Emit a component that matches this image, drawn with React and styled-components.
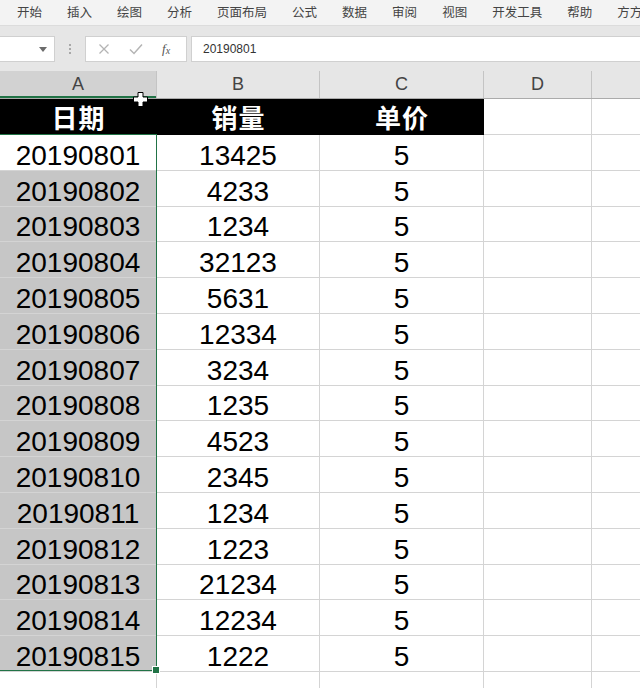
import React from "react";
import styled, { createGlobalStyle } from "styled-components";

const GlobalStyle = createGlobalStyle`
  body {
    margin: 0;
    overflow: hidden;
    background: #ffffff;
    font-family: "Liberation Sans", "Noto Sans CJK SC", sans-serif;
  }
`;

const tabs = [
  "开始",
  "插入",
  "绘图",
  "分析",
  "页面布局",
  "公式",
  "数据",
  "审阅",
  "视图",
  "开发工具",
  "帮助",
  "方方格子",
];

const columns = [
  { name: "A", width: 157 },
  { name: "B", width: 163 },
  { name: "C", width: 164 },
  { name: "D", width: 108 },
  { name: "", width: 60 },
];

const rows = [
  ["20190801", "13425", "5"],
  ["20190802", "4233", "5"],
  ["20190803", "1234", "5"],
  ["20190804", "32123", "5"],
  ["20190805", "5631", "5"],
  ["20190806", "12334", "5"],
  ["20190807", "3234", "5"],
  ["20190808", "1235", "5"],
  ["20190809", "4523", "5"],
  ["20190810", "2345", "5"],
  ["20190811", "1234", "5"],
  ["20190812", "1223", "5"],
  ["20190813", "21234", "5"],
  ["20190814", "12234", "5"],
  ["20190815", "1222", "5"],
];

const ROW_H = 35.8;
const gridTemplate = columns.map((c) => `${c.width}px`).join(" ");

const App = () => {
  return (
    <Page>
      <GlobalStyle />
      <Ribbon>
        {tabs.map((t) => (
          <Tab key={t}>{t}</Tab>
        ))}
      </Ribbon>

      <FormulaArea>
        <NameBox>
          <svg width="8" height="5" viewBox="0 0 8 5">
            <path d="M0 0 L8 0 L4 5 Z" fill="#6b6b6b" />
          </svg>
        </NameBox>
        <Grip>
          <i />
          <i />
          <i />
        </Grip>
        <FuncBox>
          <FuncIcon>
            <svg width="12" height="12" viewBox="0 0 12 12">
              <path d="M1.5 1.5 L10.5 10.5 M10.5 1.5 L1.5 10.5" stroke="#b4b4b4" strokeWidth="1.3" />
            </svg>
          </FuncIcon>
          <FuncIcon>
            <svg width="14" height="12" viewBox="0 0 14 12">
              <path d="M1 6.5 L5 10.5 L13 1.5" stroke="#b4b4b4" strokeWidth="1.5" fill="none" />
            </svg>
          </FuncIcon>
          <Fx>
            f<sub>x</sub>
          </Fx>
        </FuncBox>
        <FormulaInput>20190801</FormulaInput>
      </FormulaArea>

      <ColumnHeaders>
        {columns.map((c, i) => (
          <ColHead key={i} $selected={c.name === "A"}>
            {c.name}
          </ColHead>
        ))}
      </ColumnHeaders>

      <Sheet>
        <Row $h={36}>
          <HeadCell>日期</HeadCell>
          <HeadCell>销量</HeadCell>
          <HeadCell>单价</HeadCell>
          <Cell />
          <Cell />
        </Row>
        {rows.map((r, i) => (
          <Row key={r[0]} $h={ROW_H}>
            <Cell $selected={i > 0}>{r[0]}</Cell>
            <Cell>{r[1]}</Cell>
            <Cell>{r[2]}</Cell>
            <Cell />
            <Cell />
          </Row>
        ))}
        <Row $h={ROW_H}>
          <Cell />
          <Cell />
          <Cell />
          <Cell />
          <Cell />
        </Row>

        <Selection style={{ height: `${rows.length * ROW_H}px` }}>
          <FillHandle />
        </Selection>
        <Cursor>
          <svg width="15" height="15" viewBox="0 0 15 15">
            <path
              d="M5 0.5 H10 V5 H14.5 V10 H10 V14.5 H5 V10 H0.5 V5 H5 Z"
              fill="#ffffff"
              stroke="#000000"
              strokeWidth="1"
            />
          </svg>
        </Cursor>
      </Sheet>
    </Page>
  );
};

export default App;

const Page = styled.div`
  width: 640px;
  height: 688px;
  overflow: hidden;
  background: #ffffff;
`;

const Ribbon = styled.div`
  display: flex;
  align-items: center;
  gap: 25px;
  height: 25px;
  padding-left: 17px;
  background: #f3f3f3;
  border-bottom: 1px solid #dcdcdc;
  box-shadow: 0 1px 2px rgba(0, 0, 0, 0.08);
  white-space: nowrap;
  overflow: hidden;
`;

const Tab = styled.span`
  font-size: 12.5px;
  color: #444444;
  font-family: "Noto Sans CJK SC", sans-serif;
  line-height: 1;
`;

const FormulaArea = styled.div`
  display: flex;
  align-items: flex-start;
  height: 45px;
  padding-top: 10px;
  box-sizing: border-box;
  background: #e6e6e6;
`;

const NameBox = styled.div`
  display: flex;
  align-items: center;
  justify-content: flex-end;
  width: 55px;
  height: 26px;
  padding-right: 7px;
  box-sizing: border-box;
  background: #ffffff;
  border: 1px solid #d0d0d0;
  border-left: none;
`;

const Grip = styled.div`
  display: flex;
  flex-direction: column;
  align-items: center;
  justify-content: center;
  gap: 2px;
  width: 30px;
  height: 26px;

  i {
    display: block;
    width: 2px;
    height: 2px;
    background: #a8a8a8;
  }
`;

const FuncBox = styled.div`
  display: flex;
  align-items: center;
  width: 102px;
  height: 26px;
  box-sizing: border-box;
  padding-left: 12px;
  gap: 19px;
  background: #ffffff;
  border: 1px solid #d0d0d0;
`;

const FuncIcon = styled.span`
  display: flex;
  align-items: center;
`;

const Fx = styled.span`
  font-family: "Liberation Serif", serif;
  font-style: italic;
  font-size: 13px;
  color: #555555;

  sub {
    font-size: 10px;
    vertical-align: -1px;
  }
`;

const FormulaInput = styled.div`
  display: flex;
  align-items: center;
  flex: 1;
  height: 26px;
  margin-left: 4px;
  padding-left: 11px;
  box-sizing: border-box;
  background: #ffffff;
  border: 1px solid #d0d0d0;
  border-right: none;
  font-size: 12px;
  color: #333333;
`;

const ColumnHeaders = styled.div`
  display: grid;
  grid-template-columns: ${gridTemplate};
  height: 28px;
  background: #e6e6e6;
  border-bottom: 1px solid #ababab;
  box-sizing: border-box;
`;

const ColHead = styled.div`
  display: flex;
  align-items: center;
  justify-content: center;
  font-family: "Liberation Sans", sans-serif;
  font-size: 18px;
  color: #444444;
  background: ${(p) => (p.$selected ? "#d2d2d2" : "#e6e6e6")};
  border-right: 1px solid #c4c4c4;
  box-shadow: ${(p) => (p.$selected ? "inset 0 -2px 0 #217346" : "none")};
`;

const Sheet = styled.div`
  position: relative;
`;

const Row = styled.div`
  display: grid;
  grid-template-columns: ${gridTemplate};
  height: ${(p) => p.$h}px;
`;

const Cell = styled.div`
  display: flex;
  align-items: flex-end;
  justify-content: center;
  box-sizing: border-box;
  border-right: 1px solid #d4d4d4;
  border-bottom: 1px solid #d4d4d4;
  background: ${(p) => (p.$selected ? "#c6c6c6" : "#ffffff")};
  font-family: "Liberation Sans", sans-serif;
  font-size: 28px;
  color: #000000;
  line-height: 1;
  overflow: hidden;
  white-space: nowrap;
`;

const HeadCell = styled.div`
  display: flex;
  align-items: center;
  justify-content: center;
  background: #000000;
  color: #ffffff;
  font-family: "Noto Sans CJK SC", sans-serif;
  font-weight: 700;
  font-size: 26px;
  line-height: 1;
  letter-spacing: 1px;
`;

const Selection = styled.div`
  position: absolute;
  left: -2px;
  top: 35px;
  width: 159px;
  box-sizing: border-box;
  border: 1px solid #217346;
  pointer-events: none;
`;

const FillHandle = styled.div`
  position: absolute;
  right: -4px;
  bottom: -4px;
  width: 6px;
  height: 6px;
  background: #217346;
  border: 1px solid #ffffff;
`;

const Cursor = styled.div`
  position: absolute;
  left: 133px;
  top: -7px;
  width: 15px;
  height: 15px;
`;
